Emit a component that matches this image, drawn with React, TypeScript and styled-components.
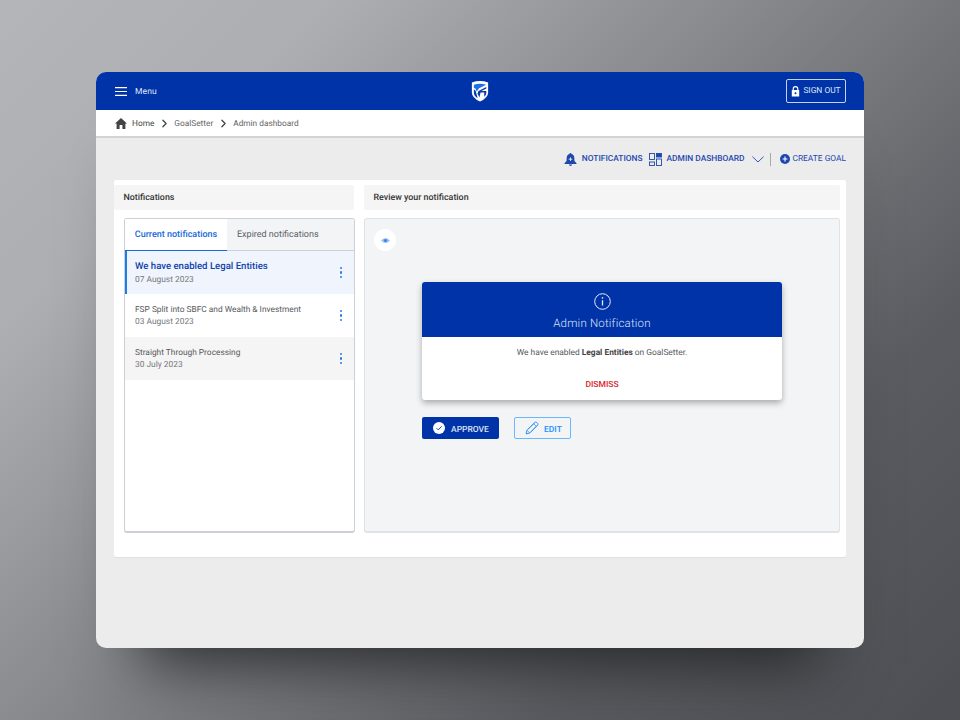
import React from 'react';
import styled, { createGlobalStyle } from 'styled-components';
import { ChevronRight } from 'lucide-react';

const Global = createGlobalStyle`
  html, body { margin: 0; padding: 0; height: 100%; }
  body {
    width: 960px; height: 720px; overflow: hidden;
    font-family: Roboto, "Liberation Sans", sans-serif;
    text-rendering: geometricPrecision;
    background: linear-gradient(135deg, #b4b5b8 0%, #adaeb1 20%, #7d7e82 52%, #5b5c61 75%, #4c4e53 100%);
  }
  #root { height: 100%; }
`;

const Stage = styled.div`
  width: 960px; height: 720px; box-sizing: border-box; padding: 72px 96px;
`;
const Win = styled.div`
  width: 768px; height: 576px; background: #ececec; border-radius: 10px; overflow: hidden;
  display: flex; flex-direction: column;
`;
const Shadow = styled.div`
  width: 768px; height: 576px; border-radius: 10px;
  box-shadow: 0 60px 60px -44px rgba(28, 29, 32, 0.85);
`;
const TopBar = styled.header`
  height: 38px; flex: none; background: #0033a8; display: grid; grid-template-columns: 1fr auto 1fr;
  align-items: center; padding: 0 18px; color: #fff; box-sizing: border-box;
`;
const MenuBtn = styled.div`
  display: flex; align-items: center; gap: 8px; font-size: 8.5px; color: #dfe6f7; letter-spacing: .1px; margin-left: 1px;
`;
const MenuLabel = styled.span`
  padding-top: 1px;
`;
const SignOut = styled.div`
  justify-self: end; width: 60px; height: 24px; box-sizing: border-box; border: 1px solid #c7d3ee; border-radius: 2px;
  display: flex; align-items: center; justify-content: center; gap: 3px; font-size: 8.4px; color: #dfe6f7;
`;
const Crumbs = styled.nav`
  height: 28px; flex: none; box-sizing: border-box; background: #fff; border-bottom: 2px solid #d3d3d3;
  display: flex; align-items: center; padding: 1px 19px 0; font-size: 8.3px; color: #666;
`;
const CrumbHome = styled.span`
  color: #444; margin-left: 5px;
`;
const CrumbSep = styled.span`
  display: inline-flex; margin: 0 3.5px; color: #444;
`;
const Actions = styled.div`
  height: 42px; flex: none; display: flex; align-items: center; justify-content: flex-end; padding: 0 18px 0 0;
  font-size: 8.4px; font-weight: 500; color: #1f48ae; box-sizing: border-box;
`;
const Act = styled.span<{ $gap: number; $left?: number }>`
  display: inline-flex; align-items: center; gap: ${p => p.$gap}px; margin-left: ${p => p.$left ?? 0}px;
`;
const CreateLabel = styled.span`
  font-weight: 400;
`;
const Divider = styled.span`
  width: 1px; height: 13px; background: #a9a9a9; margin: 0 9px 0 6px;
`;
const Card = styled.main`
  margin: 0 18px; height: 377px; flex: none; background: #fff; border-radius: 2px; box-sizing: border-box;
  padding: 5px 6px 24px 0; display: grid; grid-template-columns: 240px 476px; column-gap: 10px;
  grid-template-rows: 25px 315px; row-gap: 8px;
  box-shadow: 0 1px 1px rgba(0,0,0,.06);
`;
const Head = styled.h2`
  margin: 0; background: #f5f5f5; border-radius: 2px; font-size: 8.9px; font-weight: 500; color: #333;
  display: flex; align-items: center; padding: 1px 0 0 9.5px;
`;
const ListPanel = styled.section`
  margin-left: 10px; margin-right: -1px; border: 1px solid #ccd0d5; border-bottom-width: 2px; border-radius: 3px; background: #fff; overflow: hidden;
`;
const Tabs = styled.div`
  display: flex; height: 32px; background: #f3f4f6; border-bottom: 1px solid #ccd2da; box-sizing: border-box;
`;
const Tab = styled.div<{ $active?: boolean }>`
  width: ${p => (p.$active ? 102 : 127)}px; display: flex; align-items: center; justify-content: ${p => (p.$active ? 'center' : 'flex-start')};
  padding: 1px 0 0 ${p => (p.$active ? 0 : 10)}px; box-sizing: border-box;
  font-size: 9px; font-weight: ${p => (p.$active ? 500 : 400)}; color: ${p => (p.$active ? '#1868dc' : '#5d6167')};
  background: ${p => (p.$active ? '#fff' : 'transparent')};
  margin-bottom: ${p => (p.$active ? -1 : 0)}px;
  border-bottom: ${p => (p.$active ? '1px solid #1868dc' : 'none')};
`;
const Row = styled.div<{ $bg: string; $active?: boolean }>`
  height: 43px; box-sizing: border-box; background: ${p => p.$bg}; display: flex; align-items: center; justify-content: space-between;
  padding: 0 12px 0 ${p => (p.$active ? 8 : 10)}px;
  border-left: ${p => (p.$active ? '2px solid #1c7ce8' : 'none')};
`;
const RowText = styled.div`
  display: flex; flex-direction: column; padding-top: 1px;
`;
const RowTitle = styled.div<{ $active?: boolean }>`
  font-size: ${p => (p.$active ? 9.6 : 8.35)}px; font-weight: ${p => (p.$active ? 500 : 400)}; color: ${p => (p.$active ? '#0f3fae' : '#55585c')};
  line-height: 12px; margin-top: ${p => (p.$active ? 1 : 0)}px;
`;
const RowDate = styled.div<{ $active?: boolean }>`
  font-size: 8.4px; color: #75787c; line-height: 12px; margin-top: ${p => (p.$active ? 1 : 0)}px;
`;
const Dots = styled.span`
  display: flex; flex-direction: column; gap: 2px;
  i { width: 2px; height: 2.5px; background: #2b78e4; display: block; border-radius: 1px; }
`;
const Review = styled.section`
  border: 1px solid #e0e2e6; border-bottom-width: 2px; border-radius: 3px; background: #f3f4f6; padding: 10px 0 0 9px;
  box-sizing: border-box; display: flex; flex-direction: column; align-items: flex-start;
`;
const EyeBtn = styled.div`
  width: 22px; height: 22px; border-radius: 50%; background: #fff; display: flex; align-items: center; justify-content: center;
`;
const Dialog = styled.div`
  margin: 31px 0 0 48px; width: 360px; height: 118px; background: #fff; border-radius: 3px; overflow: hidden;
  box-shadow: 0 3px 6px rgba(0,0,0,.3); display: flex; flex-direction: column; align-items: center;
`;
const DialogHead = styled.div`
  width: 100%; height: 55px; flex: none; background: #0033a8; color: #dbe3f6; display: flex; flex-direction: column; align-items: center;
  padding-top: 11px; box-sizing: border-box; font-size: 11.5px; font-weight: 300; letter-spacing: .2px;
`;
const DialogTitle = styled.div`
  margin-top: 6px; line-height: 14px;
`;
const DialogBody = styled.p`
  margin: 9.5px 0 0; font-size: 8.4px; line-height: 12px; color: #55585c;
  b { font-weight: 700; color: #444; }
`;
const Dismiss = styled.div`
  margin-top: 20px; font-size: 8.5px; font-weight: 500; color: #d8232a; line-height: 12px;
`;
const Buttons = styled.div`
  margin: 17px 0 0 48px; display: flex; gap: 15px;
`;
const Approve = styled.div`
  width: 77px; height: 22px; background: #0033a8; border-radius: 2px; display: flex; align-items: center; gap: 6px; padding-left: 11px;
  box-sizing: border-box; color: #dbe3f6; font-size: 8.5px; font-weight: 500;
`;
const Edit = styled.div`
  width: 57px; height: 22px; border: 1px solid #6bb8ff; border-radius: 2px; display: flex; align-items: center; gap: 5px; padding-left: 10px;
  box-sizing: border-box; color: #1a8dff; font-size: 8.5px; font-weight: 500;
`;
const BtnLabel = styled.span`
  padding-top: 3px;
`;

const Logo = () => (
  <svg width="20" height="22" viewBox="0 0 20 23">
    <path d="M1.5 2.5 Q10 -.6 18.5 2.5 V13 Q18.5 18.5 10 22.5 Q1.5 18.5 1.5 13 Z" fill="#fff" />
    <path d="M3.6 5 Q10 3 16.4 5 L9 8.6 L6.6 12 L5.4 9.2 L3.6 8 Z" fill="#1b72e6" />
    <path d="M8.4 11.5 L16.6 7.4 V8.8 L11.6 11.6 H16.6 V13.2 Q16.6 16 14.4 17.6 V13 H10.6 L9.4 18.4 L7.4 14.4 Z" fill="#0b3ba6" />
    <path d="M3.6 9.6 L5.4 11.2 L7.6 19 Q3.6 16.6 3.6 13 Z" fill="#0b3ba6" />
  </svg>
);

const Home = () => (
  <svg width="12" height="11" viewBox="0 0 12 11"><path d="M6 0 L12 5.5 H10.4 V11 H7.4 V7 H4.6 V11 H1.6 V5.5 H0 Z" fill="#444" /></svg>
);
const Lock = () => (
  <svg width="9" height="11" viewBox="0 0 9 11"><path d="M2.2 4.2 V2.9 A2.3 2.3 0 0 1 6.8 2.9 V4.2" fill="none" stroke="#fff" strokeWidth="1.1" /><path d="M.8 4 H8.2 V10.4 H.8 Z M4.5 6.2 A1 1 0 1 0 4.5 8.2 A1 1 0 1 0 4.5 6.2 Z" fill="#fff" fillRule="evenodd" /></svg>
);
const Bell = () => (
  <svg width="13" height="13" viewBox="0 0 12 13"><path d="M6 0 A1 1 0 0 1 7 1 C9 1.5 9.7 3 9.8 5 L10 8 L12 10.2 V11 H0 V10.2 L2 8 L2.2 5 C2.3 3 3 1.5 5 1 A1 1 0 0 1 6 0 Z" fill="#1f48ae"/><path d="M4.4 11.6 H7.6 A1.6 1.4 0 0 1 4.4 11.6 Z" fill="#1f48ae"/><path d="M6 4.4 V8 M4.2 6.2 H7.8" stroke="#ececec" strokeWidth=".9"/></svg>
);
const Dash = () => (
  <svg width="13" height="13" viewBox="0 0 13 13" fill="none" stroke="#1f48ae" strokeWidth=".9">
    <rect x=".5" y=".5" width="5" height="6" /><rect x="7.5" y=".5" width="5" height="3.5" fill="#1f48ae" /><rect x=".5" y="9" width="5" height="3.5" /><rect x="7.5" y="6" width="5" height="6.5" />
  </svg>
);
const Caret = () => (
  <svg width="12" height="7" viewBox="0 0 12 7"><path d="M.4 .6 L6 6 L11.6 .6" fill="none" stroke="#1f48ae" strokeWidth=".9"/></svg>
);
const Plus = () => (
  <svg width="10" height="10" viewBox="0 0 10 10"><circle cx="5" cy="5" r="5" fill="#1f48ae"/><path d="M5 2.6 V7.4 M2.6 5 H7.4" stroke="#fff" strokeWidth="1.1"/></svg>
);
const Eye = () => (
  <svg width="9" height="7" viewBox="0 0 9 7"><path d="M0 3.5 Q4.5 -1.5 9 3.5 Q4.5 8.5 0 3.5 Z" fill="#9cc3f7"/><circle cx="4.5" cy="3.5" r="1.6" fill="#3f80e6"/></svg>
);
const Info = () => (
  <svg width="17" height="17" viewBox="0 0 17 17" fill="none" stroke="#e6ecf9"><circle cx="8.5" cy="8.5" r="7.8" /><path d="M8.5 7.2 V12.6" strokeWidth="1.3" /><circle cx="8.5" cy="4.9" r=".8" fill="#e6ecf9" stroke="none" /></svg>
);
const Check = () => (
  <svg width="12" height="12" viewBox="0 0 12 12"><circle cx="6" cy="6" r="6" fill="#fff"/><path d="M3.6 6.2 L5.3 7.9 L8.6 4.3" fill="none" stroke="#0033a8" strokeWidth=".9"/></svg>
);
const Burger = () => (
  <svg width="12" height="9" viewBox="0 0 12 9"><path d="M0 .6 H12 M0 4.5 H12 M0 8.4 H12" stroke="#fff" strokeWidth="1.1"/></svg>
);
const PencilIcon = () => (
  <svg width="14" height="14" viewBox="0 0 13 13" fill="none" stroke="#2a90f5" strokeWidth=".9" strokeLinejoin="round">
    <path d="M1 12 L1.8 8.6 L9 1.4 Q10 .5 11 1.4 L11.7 2.1 Q12.5 3 11.6 4 L4.4 11.2 Z" />
    <path d="M8 2.4 L10.7 5.1 M1.8 8.6 L4.4 11.2 M3 7.4 L9 1.8 M5.6 10 L11.4 4" strokeWidth=".7" />
  </svg>
);
const More = () => <Dots><i /><i /><i /></Dots>;

const rows = [
  { title: 'We have enabled Legal Entities', date: '07 August 2023', bg: '#f0f5fd', active: true },
  { title: 'FSP Split into SBFC and Wealth & Investment', date: '03 August 2023', bg: '#fff' },
  { title: 'Straight Through Processing', date: '30 July 2023', bg: '#f5f5f5' },
];

export default function App() {
  return (
    <Stage>
      <Global />
      <Shadow>
        <Win>
          <TopBar>
            <MenuBtn><Burger /><MenuLabel>Menu</MenuLabel></MenuBtn>
            <Logo />
            <SignOut><Lock />SIGN OUT</SignOut>
          </TopBar>
          <Crumbs>
            <Home /><CrumbHome>Home</CrumbHome>
            <CrumbSep><ChevronRight size={13} strokeWidth={2.4} /></CrumbSep>GoalSetter
            <CrumbSep><ChevronRight size={13} strokeWidth={2.4} /></CrumbSep>Admin dashboard
          </Crumbs>
          <Actions>
            <Act $gap={5}><Bell />NOTIFICATIONS</Act>
            <Act $gap={5} $left={6}><Dash />ADMIN DASHBOARD</Act>
            <Act $gap={0} $left={7}><Caret /></Act>
            <Divider />
            <Act $gap={3}><Plus /><CreateLabel>CREATE GOAL</CreateLabel></Act>
          </Actions>
          <Card>
            <Head>Notifications</Head>
            <Head>Review your notification</Head>
            <ListPanel>
              <Tabs>
                <Tab $active>Current notifications</Tab>
                <Tab>Expired notifications</Tab>
              </Tabs>
              {rows.map(r => (
                <Row key={r.title} $bg={r.bg} $active={r.active}>
                  <RowText>
                    <RowTitle $active={r.active}>{r.title}</RowTitle>
                    <RowDate $active={r.active}>{r.date}</RowDate>
                  </RowText>
                  <More />
                </Row>
              ))}
            </ListPanel>
            <Review>
              <EyeBtn><Eye /></EyeBtn>
              <Dialog>
                <DialogHead>
                  <Info />
                  <DialogTitle>Admin Notification</DialogTitle>
                </DialogHead>
                <DialogBody>We have enabled <b>Legal Entities</b> on GoalSetter.</DialogBody>
                <Dismiss>DISMISS</Dismiss>
              </Dialog>
              <Buttons>
                <Approve><Check /><BtnLabel>APPROVE</BtnLabel></Approve>
                <Edit><PencilIcon /><BtnLabel>EDIT</BtnLabel></Edit>
              </Buttons>
            </Review>
          </Card>
        </Win>
      </Shadow>
    </Stage>
  );
}
